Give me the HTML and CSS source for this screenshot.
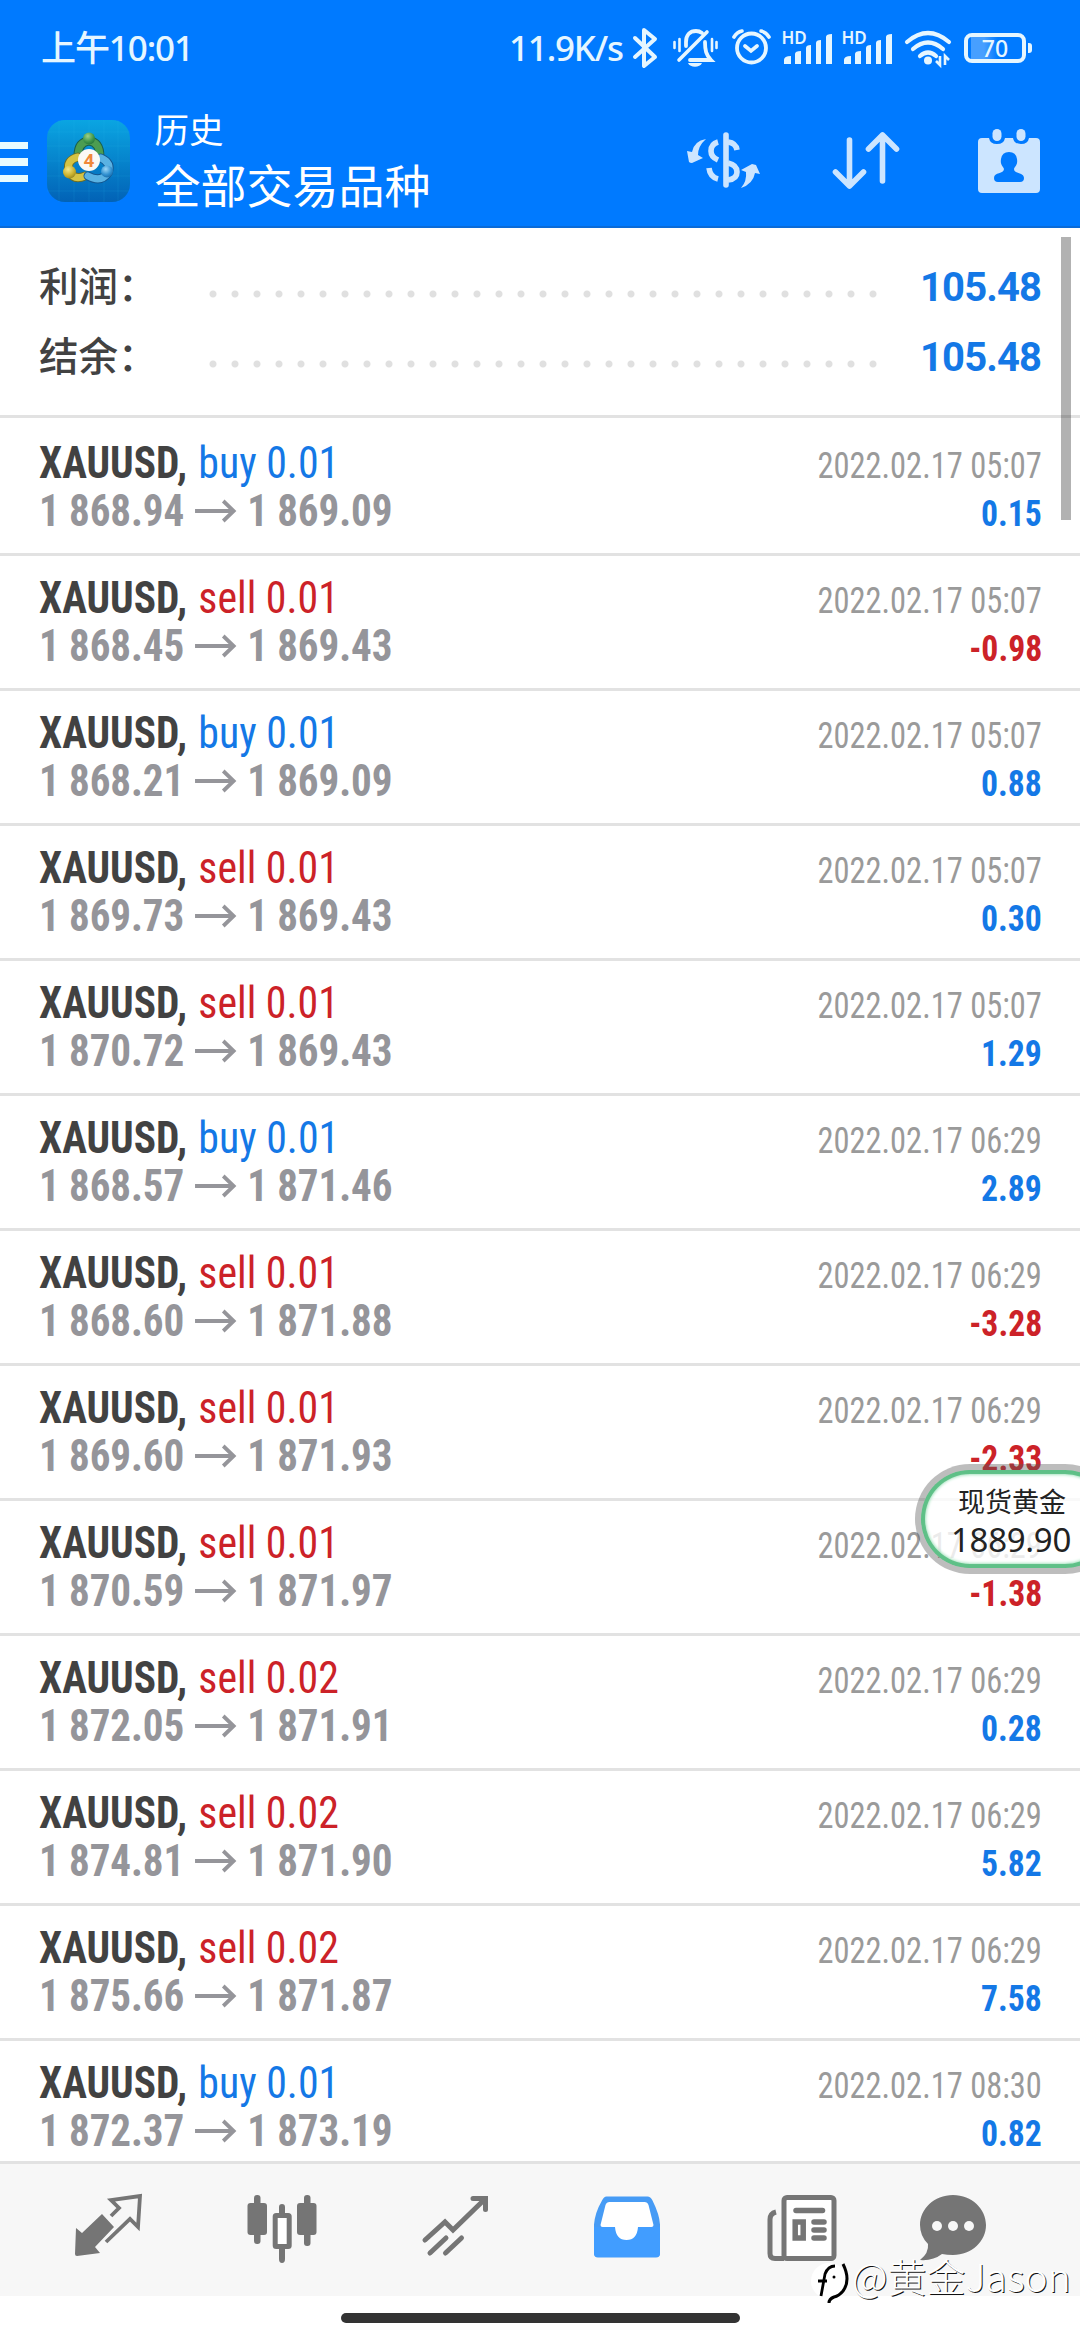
FILE: index.html
```html
<!DOCTYPE html>
<html lang="zh-CN">
<head>
<meta charset="utf-8">
<title>历史</title>
<link rel="stylesheet" href="styles.css">
</head>
<body>
<div class="screen">
  <header class="header">
    <div class="status">
      <span class="clock">上午10:01</span>
      <div class="status-right">
        <span class="speed">11.9K/s</span>
        <svg class="bt" width="28" height="42" viewBox="629 27 28 42"><path d="M633 38l20 19-11 9V30l11 9-20 18" fill="none" stroke="#e6f6ff" stroke-width="4" stroke-linejoin="round" stroke-linecap="round"/></svg>
        <svg class="bell" width="48" height="42" viewBox="669 28 48 42"><g fill="none" stroke="#e6f6ff" stroke-linecap="round"><path d="M705 33L677 61" stroke-width="3.6"/><path d="M684 47v-4c0-7 4-11 10-11 2 0 4 .5 6 2M703 43c0 8 1 13 6 18h-21" stroke-width="3.8"/><path d="M672.500 43v6M677.500 40v12M710 40v12M714.500 43v6" stroke-width="2.600"/></g><path d="M686 64h14c-2 5-12 5-14 0z" fill="#e6f6ff"/></svg>
        <svg class="alarm" width="42" height="40" viewBox="729 29 42 40"><g fill="none" stroke="#e6f6ff" stroke-linecap="round"><circle cx="749.500" cy="49" r="14.500" stroke-width="3.800"/><path d="M743 47l6 5 6-5M732 38q3-5 8-6M767 38q-3-5-8-6" stroke-width="3.600"/></g></svg>
        <svg class="sig" width="52" height="40" viewBox="779 28 52 40"><text x="779.500" y="44" class="hd">HD</text><path d="M782 64v-4q0-4 7-4v8zM793 64V54q0-3 6-3v13zM804 64V48q0-3 5-3v19zM814 64V43q0-3 5-3v24zM824 64V37q0-3 6-3v30z" fill="#e6f6ff"/></svg>
        <svg class="sig" width="52" height="40" viewBox="779 28 52 40"><text x="779.500" y="44" class="hd">HD</text><path d="M782 64v-4q0-4 7-4v8zM793 64V54q0-3 6-3v13zM804 64V48q0-3 5-3v19zM814 64V43q0-3 5-3v24zM824 64V37q0-3 6-3v30z" fill="#e6f6ff"/></svg>
        <svg class="wifi" width="50" height="40" viewBox="901 29 50 40"><g fill="none" stroke="#e6f6ff" stroke-width="4.200" stroke-linecap="round"><path d="M905 43q21-18 42 0M911 50q15-13 30 0M918 57q8-7 16 0"/></g><circle cx="926" cy="61.500" r="4" fill="#e6f6ff"/><path d="M938 57v9l-4-4M943 66v-9l4 4" fill="none" stroke="#e6f6ff" stroke-width="2.600"/></svg>
        <div class="battery"><span>70</span></div>
      </div>
    </div>
    <div class="bar">
      <div class="menu"><i></i><i></i><i></i></div>
      <svg class="logo" width="83" height="82" viewBox="0 0 83 82">
        <defs>
          <linearGradient id="bg" x1="0" y1="0" x2="0" y2="1"><stop offset="0" stop-color="#0aa5e2"/><stop offset="1" stop-color="#0262b6"/></linearGradient>
          <radialGradient id="g" cx=".4" cy=".3" r=".8"><stop offset="0" stop-color="#9ed08a"/><stop offset=".6" stop-color="#3f964a"/><stop offset="1" stop-color="#1f6d38"/></radialGradient>
          <radialGradient id="y" cx=".4" cy=".3" r=".8"><stop offset="0" stop-color="#f4e78a"/><stop offset=".6" stop-color="#c9b02c"/><stop offset="1" stop-color="#8a7a1c"/></radialGradient>
          <radialGradient id="b" cx=".4" cy=".3" r=".8"><stop offset="0" stop-color="#9bd6f6"/><stop offset=".6" stop-color="#2f8fd0"/><stop offset="1" stop-color="#14629f"/></radialGradient>
        </defs>
        <rect width="83" height="82" rx="18" fill="url(#bg)"/>
        <path d="M12 0v82M27 0v82M42 0v82M57 0v82M71 0v82M0 12h83M0 26h83M0 41h83M0 56h83M0 71h83" stroke="#35bdec" stroke-opacity=".13"/>
        <g fill="none" stroke-linecap="round">
          <path d="M31 36Q31 22 42 21Q53 22 53 37" stroke="#195f4e" stroke-width="9"/><path d="M31 36Q31 22 42 21Q53 22 53 37" stroke="#4c9d51" stroke-width="7"/>
          <path d="M31 37Q19 40 22 51Q27 61 38 56" stroke="#6c6d25" stroke-width="9"/><path d="M31 37Q19 40 22 51Q27 61 38 56" stroke="#d5c343" stroke-width="7"/>
          <path d="M54 38Q65 43 61 53Q54 63 41 56" stroke="#14568f" stroke-width="9"/><path d="M54 38Q65 43 61 53Q54 63 41 56" stroke="#5ab2e3" stroke-width="7"/>
        </g>
        <circle cx="42" cy="18.500" r="6" fill="url(#g)"/><circle cx="22.500" cy="52" r="6.500" fill="url(#y)"/><circle cx="60" cy="51.500" r="6" fill="url(#b)"/>
        <circle cx="42" cy="40" r="11" fill="#fbf9f4"/>
        <text x="42" y="47" text-anchor="middle" class="four">4</text>
      </svg>
      <div class="titles"><div class="t1">历史</div><div class="t2">全部交易品种</div></div>
      <svg class="i-cur" width="76" height="62" viewBox="684 130 76 62"><g fill="none" stroke="#cce5ff" stroke-width="5.600"><path d="M725 135v50" stroke-linecap="round"/><path d="M717 142q-7 2-7 9 0 6 7 9"/><path d="M727 142q8 1 9 8M727 163q9 2 9 9t-9 8M708 168q1 9 9 11" /></g><path d="M705 139q-12 2-14 13l-5-1 2 11q1 1 3 1l11-5-5-3q0-9 8-16zM740 188q12-4 14-15l5 1-4-9-4-1-11 6 5 2q1 9-5 16z" fill="#cce5ff"/></svg>
      <svg class="i-sort" width="71" height="62" viewBox="830 131 71 62"><path d="M848.500 141v46M834.500 173l14 14 14-14M881.500 182v-46M867.500 150l14-14 14 14" fill="none" stroke="#cce5ff" stroke-width="5.600" stroke-linecap="round" stroke-linejoin="round"/></svg>
      <svg class="i-cal" width="64" height="66" viewBox="976 128 64 66"><path d="M981 138h7q1 6 8 6t8-6h8q1 6 8 6t8-6h7q4 0 4 4v47q0 4-4 4h-54q-4 0-4-4v-47q0-4 4-4z" fill="#cce5ff"/><rect x="991.500" y="129" width="9" height="12" rx="4.500" fill="#cce5ff"/><rect x="1015.500" y="129" width="9" height="12" rx="4.500" fill="#cce5ff"/><path d="M1008 152q7 0 8 7c1 6-2 7-3 10 0 5 10 3 10 9q0 4-4 4h-22q-4 0-4-4c0-6 10-4 10-9-1-3-4-4-3-10q1-7 8-7z" fill="#007aff"/></svg>
    </div>
  </header>

  <section class="summary">
    <div class="sum"><span class="lbl">利润：</span><span class="dots"></span><span class="amt">105.48</span></div>
    <div class="sum"><span class="lbl">结余：</span><span class="dots"></span><span class="amt">105.48</span></div>
  </section>

  <main class="list" id="list"></main>

  <nav class="tabs">
    <svg width="70" height="64" viewBox="73 2199 70 64"><path d="M76 2233l6 5 20-19 12 13-19 20 5 6-23 3q-2 0-2-2z" fill="#757575"/><path d="M111 2221l8-8-8-8 29-4-2 31-8-8-24 23" fill="none" stroke="#757575" stroke-width="3.800" stroke-linejoin="miter"/></svg>
    <svg width="72" height="70" viewBox="245 2193 72 70"><g fill="#757575"><rect x="253" y="2194" width="6.500" height="49" rx="3"/><rect x="246.500" y="2202" width="19.500" height="32" rx="3"/><rect x="303" y="2194" width="6.500" height="51" rx="3"/><rect x="296" y="2202" width="19.500" height="32" rx="3"/><path d="M278 2213v-7q0-3 3-3t3 3v7zM278 2246v12q0 4 3 4t3-4v-12z"/></g><rect x="274.200" y="2214.500" width="14" height="31" rx="1" fill="#fff" stroke="#757575" stroke-width="5"/></svg>
    <svg width="68" height="64" viewBox="420 2195 68 64"><path d="M424 2241l20-18 8 8 32-31M472 2199.500h12.500v11M429 2254l16-15M444.500 2254l16-15" fill="none" stroke="#757575" stroke-width="5" stroke-linecap="round" stroke-linejoin="miter"/></svg>
    <svg class="t-tray" width="68" height="64" viewBox="593.500 2195 68 64"><path d="M607 2196.500h41q3 0 5 4 7 14 7.500 24v29q0 4-4 4h-58q-4 0-4-4v-29q1-12 8-24 2-4 4.500-4z" fill="#469bf5"/><path d="M594.500 2227h66v26q0 4-4 4h-58q-4 0-4-4z" fill="#419dff"/><path d="M610 2202h35q3 0 4 3l5 20q0 2-2 2h-13.500q-1 13-11.500 13t-11.500-13H603q-2 0-2-2l5-20q1-3 4-3z" fill="#fff"/></svg>
    <svg class="t-news" width="70" height="68" viewBox="766 2193 70 68"><g fill="none" stroke="#757575" stroke-width="5"><rect x="783" y="2196.500" width="50" height="61" rx="3" fill="#fff"/><path d="M783 2257.500h-9q-5 0-5-5v-34q0-6 6-7.500"/></g><path d="M795 2209.500h26.500" stroke="#757575" stroke-width="5.500" stroke-linecap="round"/><path d="M813 2221h10M813 2229h10M813 2237h10" stroke="#757575" stroke-width="5.500" stroke-linecap="round"/><rect x="794.200" y="2221" width="8" height="16" fill="#fff" stroke="#757575" stroke-width="5.500"/></svg>
    <svg class="t-chat" width="70" height="68" viewBox="918 2193 70 68"><path d="M953 2194c19 0 33 14 33 30s-14 30-33 30q-6 0-11-1-9 7-22 6 9-7 8-16-8-8-8-19c0-16 14-30 33-30z" fill="#757575"/><circle cx="937" cy="2225" r="5" fill="#f7f7f7"/><circle cx="953" cy="2225" r="5" fill="#f7f7f7"/><circle cx="969" cy="2225" r="5" fill="#f7f7f7"/></svg>
  </nav>
  <div class="home"><i></i></div>

  <div class="scrollbar"></div>
  <div class="float"><div class="f1">现货黄金</div><div class="f2">1889.90</div></div>
  <div class="mark">
    <svg width="42" height="48" viewBox="810 2262 42 48"><circle cx="829" cy="2285" r="18" fill="#fff"/><path d="M818 2285h9M821 2300l4-22q3-8 10-8" fill="none" stroke="#000" stroke-width="2.800"/><path d="M843 2268q8 16 0 27-4 5-9 6-5 2-5 6" fill="none" stroke="#000" stroke-width="3"/><circle cx="834" cy="2281" r="1.500"/></svg>
    <span>@黄金Jason</span>
  </div>
</div>
<script src="app.js"></script>
</body>
</html>
```
FILE: styles.css
```css
*{box-sizing:border-box}
body{margin:0;background:#fff}
.screen{position:relative;width:1080px;height:2340px;overflow:hidden;display:flex;flex-direction:column;background:#fff;font-family:Roboto,"Noto Sans CJK SC",sans-serif}
svg{display:block;flex:none;overflow:visible}
.header{height:228px;background:#007aff;border-bottom:2px solid #0a6bd8;flex:none}
.status{height:96px;display:flex;align-items:center;justify-content:space-between;padding:0 48px 0 41px;color:#e6f6ff;font:500 35px/50px "Noto Sans","Noto Sans CJK SC",sans-serif}
.clock{letter-spacing:-1.100px}
.status-right{display:flex;align-items:center}
.speed{width:122px;letter-spacing:-1.200px}
.bt{margin-right:12px}
.bell{margin-right:12px}
.alarm{margin-right:8px}
.sig{margin-right:8px}
.wifi{margin:0 11px 0 2px}
.hd{font:600 17px "Noto Sans",sans-serif;letter-spacing:0;fill:#e6f6ff}
.battery{position:relative;width:62px;height:30px;border:4px solid #e6f6ff;border-radius:8px;background:linear-gradient(90deg,#007aff 3px,#479fff 3px,#479fff 16px,#007aff 30px);margin-right:6px;text-align:center;font:500 23px/23px "Noto Sans",sans-serif}
.battery::after{content:"";position:absolute;right:-10px;top:6px;width:4px;height:10px;border-radius:0 3px 3px 0;background:#e6f6ff}
.bar{height:130px;display:flex;align-items:center}
.menu{width:27.500px;margin-right:19px;padding-top:2px;display:flex;flex-direction:column;gap:9px}
.menu i{height:7.500px;background:#e8fbff}
.four{font:700 19px Roboto,sans-serif;fill:#f0883a}
.titles{width:530px;margin-left:25px;padding-bottom:6px;color:#fff;font-family:"Noto Sans CJK SC",sans-serif}
.t1{font-size:34.500px;line-height:50px}
.t2{font-size:46px;line-height:60px}
.i-cal{margin-left:75px}
.i-sort{margin-left:70px}
.summary{height:190px;padding:24px 39px 0 39px;border-bottom:3px solid #e2e2e2;flex:none}
.sum{height:70px;display:flex;align-items:center}
.lbl{width:169px;padding-bottom:6px;font:500 39.500px/64px "Noto Sans CJK SC",sans-serif;color:#424242}
.dots{width:682px;height:8px;margin-top:14px;background:radial-gradient(circle at 5px 4px,#e0e0e0 3px,transparent 4px) 0 0/22px 8px repeat-x}
.amt{margin-left:auto;font-weight:700;font-size:40px;letter-spacing:-.9px;color:#1478e6}
.list{height:1743px;overflow:hidden;flex:none;font-stretch:75%}
.row{height:135px;border-bottom:3px solid #e2e2e2;padding:18px 38px 0 39px;display:flex;justify-content:space-between}
.row:first-child{height:138px;padding-top:21px}
.left,.right{display:flex;flex-direction:column}
.left{transform:scaleX(.94);transform-origin:left}
.right{align-items:flex-end;padding-top:2px}
.line{height:48px;display:flex;align-items:center;white-space:pre}
.sym{font-weight:700;font-size:44px;color:#424242}
.op{font-size:44.500px;margin-left:12px}
.px{font-weight:700;font-size:43.700px;letter-spacing:-.1px;color:#95959a}
.arrow{margin:0 11px 0 12px}
.date{font-size:37px;color:#9a9a9a;transform:scaleX(.877);transform-origin:right}
.pl{font-weight:700;font-size:37px;transform:scaleX(.91);transform-origin:right}
.blue{color:#1478e6}
.red{color:#cc2228}
.tabs{height:135px;border-top:3px solid #e2e2e2;background:#f7f7f7;flex:none;display:grid;grid-template-columns:70px 72px 68px 68px 70px 70px;column-gap:103px;padding:30px 0 0 73px}
.t-tray{margin:1px 0 0 1px}
.t-news{margin-left:4px}
.t-chat{margin-left:-18px}
.home{height:44px;display:flex;justify-content:center;align-items:center}
.home i{width:399px;height:10px;border-radius:5px;background:#333}
.scrollbar{position:absolute;left:1061px;top:237px;width:10px;height:283px;background:rgba(0,0,0,.3)}
.float{position:absolute;left:915px;top:1464px;width:205px;height:110px;border-radius:55px;border:6px solid rgba(90,90,90,.4);color:#222;background:rgba(255,255,255,.8);background-clip:padding-box;box-shadow:inset 0 0 0 4px rgba(70,180,115,.75),inset 0 0 3px 5px #a9e4c2}
.f1{font:400 27px/36px "Noto Sans CJK SC",sans-serif;margin:13px 0 0 37px}
.f2{font:400 33px/40px "Noto Sans",sans-serif;letter-spacing:-.3px;margin:1px 0 0 30px}
.mark{position:absolute;left:810px;top:2250px;display:flex;align-items:center;color:#fff;font:300 39px/50px "Noto Sans CJK SC",sans-serif;text-shadow:1px 1px 0 #111}
.mark svg{margin-top:6px}
.mark span{padding-bottom:7px}
```
FILE: app.js
```js
const trades = [
  ['buy', '0.01', '1 868.94', '1 869.09', '02.17 05:07', '0.15'],
  ['sell', '0.01', '1 868.45', '1 869.43', '02.17 05:07', '-0.98'],
  ['buy', '0.01', '1 868.21', '1 869.09', '02.17 05:07', '0.88'],
  ['sell', '0.01', '1 869.73', '1 869.43', '02.17 05:07', '0.30'],
  ['sell', '0.01', '1 870.72', '1 869.43', '02.17 05:07', '1.29'],
  ['buy', '0.01', '1 868.57', '1 871.46', '02.17 06:29', '2.89'],
  ['sell', '0.01', '1 868.60', '1 871.88', '02.17 06:29', '-3.28'],
  ['sell', '0.01', '1 869.60', '1 871.93', '02.17 06:29', '-2.33'],
  ['sell', '0.01', '1 870.59', '1 871.97', '02.17 06:29', '-1.38'],
  ['sell', '0.02', '1 872.05', '1 871.91', '02.17 06:29', '0.28'],
  ['sell', '0.02', '1 874.81', '1 871.90', '02.17 06:29', '5.82'],
  ['sell', '0.02', '1 875.66', '1 871.87', '02.17 06:29', '7.58'],
  ['buy', '0.01', '1 872.37', '1 873.19', '02.17 08:30', '0.82'],
];
const arrow = '<svg class="arrow" width="44" height="24" viewBox="0 0 44 24"><path d="M0 12h41M30 2l11 10-11 10" fill="none" stroke="#95959a" stroke-width="4"/></svg>';
document.getElementById('list').innerHTML = trades.map(([op, vol, from, to, date, pl]) => `
  <div class="row">
    <div class="left">
      <div class="line"><span class="sym">XAUUSD,</span><span class="op ${op === 'buy' ? 'blue' : 'red'}">${op} ${vol}</span></div>
      <div class="line"><span class="px">${from}</span>${arrow}<span class="px">${to}</span></div>
    </div>
    <div class="right">
      <div class="line"><span class="date">2022.${date}</span></div>
      <div class="line"><span class="pl ${pl[0] === '-' ? 'red' : 'blue'}">${pl}</span></div>
    </div>
  </div>`).join('');
```
